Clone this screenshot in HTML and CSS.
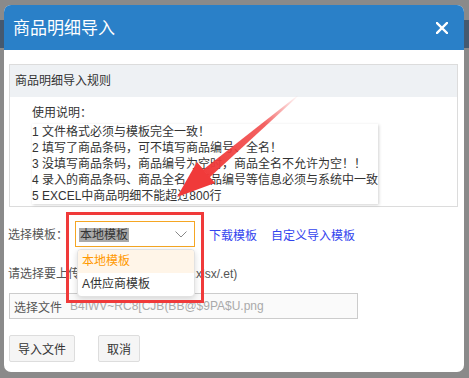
FILE: index.html
```html
<!DOCTYPE html>
<html>
<head>
<meta charset="utf-8">
<link rel="stylesheet" href="styles.css">
</head>
<body>
<div class="modal">
  <div class="hd">
    <span class="title">商品明细导入</span>
    <svg class="close" width="12" height="12" viewBox="0 0 12 12"><path d="M1 1 L11 11 M11 1 L1 11" stroke="#fff" stroke-width="2.4" stroke-linecap="square"/></svg>
  </div>
  <div class="bd">
    <div class="panel">
      <div class="panel-hd">商品明细导入规则</div>
      <div class="panel-bd">
        <div class="intro">使用说明：</div>
        <div class="rules">
          <div>1 文件格式必须与模板完全一致！</div>
          <div>2 填写了商品条码，可不填写商品编号、全名！</div>
          <div>3 没填写商品条码，商品编号为空时，商品全名不允许为空！！</div>
          <div>4 录入的商品条码、商品全名、商品编号等信息必须与系统中一致</div>
          <div>5 EXCEL中商品明细不能超过800行</div>
        </div>
      </div>
    </div>
    <div class="select-row">
      <span class="label">选择模板：</span>
      <div class="select-wrap">
        <div class="select">
          <span class="sel-text">本地模板</span>
          <svg class="chev" width="12" height="7" viewBox="0 0 12 7"><path d="M0.5 0.5 L6 6 L11.5 0.5" fill="none" stroke="#888" stroke-width="1"/></svg>
        </div>
        <div class="dropdown">
          <div class="opt active">本地模板</div>
          <div class="opt">A供应商模板</div>
        </div>
      </div>
      <a class="link">下载模板</a>
      <a class="link">自定义导入模板</a>
    </div>
    <div class="hint">请选择要上传的文件(文件格式:.xls/.xlsx/.et)</div>
    <div class="file"><span class="fbtn">选择文件</span><span class="fname">B4IWV~RC8[CJB(BB@$9PA$U.png</span></div>
    <div class="btns">
      <button class="btn">导入文件</button>
      <button class="btn">取消</button>
    </div>
  </div>
</div>
<div class="redbox"></div>
<svg class="arrow" width="469" height="378" viewBox="0 0 469 378">
  <defs>
    <linearGradient id="g" x1="298" y1="95" x2="200" y2="178" gradientUnits="userSpaceOnUse">
      <stop offset="0" stop-color="#f03a3a" stop-opacity="0"/>
      <stop offset="0.35" stop-color="#f03a3a" stop-opacity="0.8"/>
      <stop offset="1" stop-color="#f03a3a"/>
    </linearGradient>
  </defs>
  <polygon points="298,95 298.6,95.7 209.5,177.5 203,169.8" fill="url(#g)"/>
  <polygon points="177,197 197,162 215,183" fill="#f03a3a"/>
</svg>
</body>
</html>
```
FILE: styles.css
```css
html, body {
  margin: 0;
  padding: 0;
}
body {
  width: 469px;
  height: 378px;
  overflow: hidden;
  position: relative;
  background: linear-gradient(to bottom, #8a8a8a 0, #8a8a8a 20px, #45596f 20px, #45596f 48px, #8a8a8a 48px);
  font-family: "Liberation Sans", "Noto Sans CJK SC", sans-serif;
  font-size: 12px;
  color: #333;
}
.modal {
  position: absolute;
  left: 4px;
  top: 5px;
  width: 460px;
  height: 367px;
  background: #fff;
  border-radius: 7px;
  overflow: hidden;
}
.hd {
  height: 45px;
  background: #2a80c8;
  display: flex;
  align-items: center;
  justify-content: space-between;
  padding: 0 16px 0 9px;
}
.title {
  color: #fff;
  font-size: 17px;
  line-height: 20px;
  padding-top: 2px;
}
.close {
  display: block;
  margin-top: 0;
}
.bd {
  padding: 14px 6px 0 4px;
}
.panel {
  margin-left: 1px;
  border: 1px solid #dcdcdc;
}
.panel-hd {
  height: 32px;
  line-height: 32px;
  background: #eef1f4;
  padding-left: 5px;
  color: #333;
}
.panel-bd {
  padding: 8px 0 2px 22px;
}
.intro {
  line-height: 16px;
}
.rules {
  margin-top: 3px;
  width: 346px;
  white-space: nowrap;
  line-height: 16px;
  box-shadow: 1px 1px 3px rgba(0, 0, 0, 0.18);
}
.select-row {
  display: flex;
  align-items: center;
  height: 26px;
  margin-top: 14px;
}
.label {
  width: 67px;
  color: #555;
  line-height: 16px;
  padding-top: 1px;
}
.select-wrap {
  position: relative;
  width: 120px;
  height: 26px;
  margin-right: 14px;
}
.select {
  box-sizing: border-box;
  height: 26px;
  border: 1px solid #f5a623;
  display: flex;
  align-items: center;
  justify-content: space-between;
  padding: 0 7px 0 3px;
}
.sel-text {
  background: #a9a9a9;
  color: #333;
  line-height: 14px;
  padding: 0 1px;
  margin-top: 1px;
}
.chev {
  display: block;
  margin-top: 0;
}
.dropdown {
  position: absolute;
  left: 2px;
  top: 28px;
  width: 116px;
  background: #fff;
  border: 1px solid #e2e2e2;
  border-radius: 4px;
  box-shadow: 0 2px 6px rgba(0, 0, 0, 0.15);
  overflow: hidden;
  z-index: 2;
}
.opt {
  height: 23px;
  line-height: 23px;
  padding-left: 4px;
  color: #333;
}
.opt.active {
  background: #fff5e8;
  color: #ff9900;
}
.link {
  color: #3344ee;
  margin-right: 14px;
  line-height: 16px;
  padding-top: 4px;
}
.hint {
  margin-top: 19px;
  line-height: 16px;
  color: #555;
}
.file {
  margin-top: 11px;
  margin-left: 1px;
  box-sizing: border-box;
  width: 349px;
  height: 26px;
  border: 1px solid #cccccc;
  background: #fafafa;
  display: flex;
  align-items: center;
  padding-left: 4px;
}
.fbtn {
  color: #555;
  margin-right: 8px;
}
.fname {
  color: #aaa;
}
.btns {
  margin-top: 16px;
  margin-left: 1px;
  display: flex;
  gap: 23px;
}
.btn {
  box-sizing: border-box;
  height: 27px;
  padding: 0 8px;
  font-family: "Liberation Sans", "Noto Sans CJK SC", sans-serif;
  font-size: 12px;
  color: #333;
  background: #f5f5f5;
  border: 1px solid #dddddd;
  border-radius: 2px;
}
.redbox {
  position: absolute;
  left: 66px;
  top: 212px;
  width: 132px;
  height: 85px;
  border: 3px solid #f03a3a;
  z-index: 3;
}
.arrow {
  position: absolute;
  left: 0;
  top: 0;
  z-index: 4;
}
```
